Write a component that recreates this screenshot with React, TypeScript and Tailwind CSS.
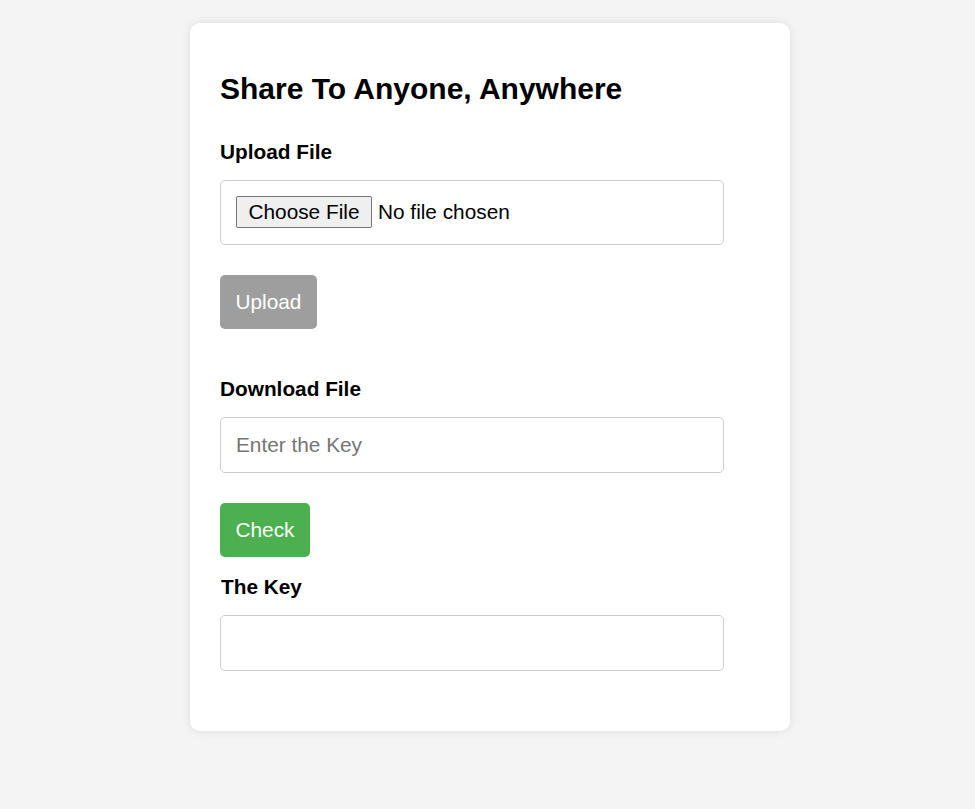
import React, { useState } from 'react';

export default function App() {
  const [key, setKey] = useState('');
  const [result] = useState('');

  return (
    <div className="min-h-screen bg-[#f4f4f4] pt-[23px] pl-[5px] font-['Liberation_Sans',Arial,sans-serif] text-black">
      <div className="mx-auto w-[600px] rounded-[10px] bg-white p-[30px] shadow-[0_0_10px_rgba(0,0,0,0.1)]">
        <h1 className="mt-[19px] text-[30px] font-bold leading-[34px]">Share To Anyone, Anywhere</h1>

        <label className="mt-[34px] block text-[20.8px] font-bold leading-[24px]">Upload File</label>
        <input
          type="file"
          className="mt-[16px] block h-[65px] w-[504px] rounded-[5px] border border-[#cccccc] px-[15px] py-[15px] text-[20.8px] leading-[24px] file:mr-[6px] file:rounded-[2px] file:border file:border-[#767676] file:bg-[#efefef] file:px-[11.5px] file:py-[3px] file:text-black"
        />
        <button className="mt-[30px] block h-[54px] rounded-[5px] bg-[#9e9e9e] px-[15.5px] text-[20.8px] leading-[24px] text-white">
          Upload
        </button>

        <label className="mt-[48px] block text-[20.8px] font-bold leading-[24px]">Download File</label>
        <input
          type="text"
          value={key}
          onChange={e => setKey(e.target.value)}
          placeholder="Enter the Key"
          className="mt-[16px] block h-[56px] w-[504px] rounded-[5px] border border-[#cccccc] px-[15px] text-[20.8px] leading-[24px] outline-none placeholder:text-[#757575]"
        />
        <button className="mt-[30px] block h-[54px] rounded-[5px] bg-[#4caf50] px-[15.5px] text-[20.8px] leading-[24px] text-white">
          Check
        </button>

        <label className="mt-[18px] block pl-px text-[20.8px] font-bold leading-[24px]">The Key</label>
        <input
          type="text"
          readOnly
          value={result}
          className="mt-[16px] mb-[30px] block h-[56px] w-[504px] rounded-[5px] border border-[#cccccc] px-[15px] text-[20.8px] leading-[24px] outline-none"
        />
      </div>
    </div>
  );
}
